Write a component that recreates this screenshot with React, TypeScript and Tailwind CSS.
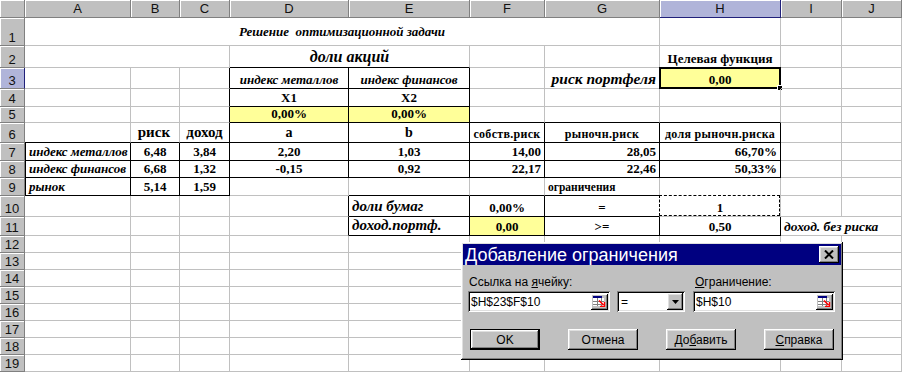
import clsx from "clsx";

type CellSpec = {
  t?: string;
  span?: number;
  a?: "l" | "c" | "r";
  v?: boolean;
  f?: string;
  i?: boolean;
  rb?: boolean;
  bb?: boolean;
  lb?: boolean;
  y?: boolean;
  active?: boolean;
  ants?: boolean;
};

const COLS = ["A", "B", "C", "D", "E", "F", "G", "H", "I", "J"];

const spanCls: Record<number, string> = {
  1: "",
  2: "col-span-2",
  3: "col-span-3",
  7: "col-span-7",
};
const al = { l: "justify-start", c: "justify-center", r: "justify-end" };

const e: CellSpec = {};
const small = "text-[12px] tracking-[0.3px]";

// rows 1..11, everything below is empty
const sheet: Record<number, CellSpec[]> = {
  1: [{ span: 7, t: "Решение  оптимизационной задачи", a: "c", v: true, i: true, f: "text-[13px]" }, e, e, e],
  2: [
    { span: 3 },
    { span: 2, t: "доли акций", a: "c", i: true, f: "text-[16px]", bb: true },
    e,
    e,
    { t: "Целевая функция", a: "c" },
    e,
    e,
  ],
  3: [
    e,
    e,
    { rb: true },
    { t: "индекс металлов", a: "c", i: true, rb: true, bb: true },
    { t: "индекс финансов", a: "c", i: true, rb: true, bb: true },
    e,
    { t: "риск портфеля", a: "r", i: true, f: "text-[15.5px]" },
    { t: "0,00", a: "c", y: true, active: true },
    e,
    e,
  ],
  4: [e, e, { rb: true }, { t: "X1", a: "c", rb: true, bb: true }, { t: "X2", a: "c", rb: true, bb: true }, e, e, e, e, e],
  5: [
    e,
    e,
    { rb: true },
    { t: "0,00%", a: "c", y: true, rb: true, bb: true },
    { t: "0,00%", a: "c", y: true, rb: true, bb: true },
    { bb: true },
    { bb: true },
    { bb: true },
    e,
    e,
  ],
  6: [
    { bb: true },
    { t: " риск", f: "text-[15px]", bb: true },
    { t: "доход", a: "c", f: "text-[15px]", rb: true, bb: true },
    { t: "a", a: "c", f: "text-[14px]", rb: true, bb: true },
    { t: "b", a: "c", f: "text-[14px]", rb: true, bb: true },
    { t: "собств.риск", a: "c", f: small, rb: true, bb: true },
    { t: "рыночн.риск", a: "c", f: small, rb: true, bb: true },
    { t: "доля рыночн.риска", a: "c", f: small, rb: true, bb: true },
    e,
    e,
  ],
  7: [
    { t: "индекс металлов", i: true, lb: true, rb: true, bb: true },
    { t: "6,48", a: "c", rb: true, bb: true },
    { t: "3,84", a: "c", rb: true, bb: true },
    { t: "2,20", a: "c", rb: true, bb: true },
    { t: "1,03", a: "c", rb: true, bb: true },
    { t: "14,00", a: "r", rb: true, bb: true },
    { t: "28,05", a: "r", rb: true, bb: true },
    { t: "66,70%", a: "r", rb: true, bb: true },
    e,
    e,
  ],
  8: [
    { t: "индекс финансов", i: true, lb: true, rb: true, bb: true },
    { t: "6,68", a: "c", rb: true, bb: true },
    { t: "1,32", a: "c", rb: true, bb: true },
    { t: "-0,15", a: "c", rb: true, bb: true },
    { t: "0,92", a: "c", rb: true, bb: true },
    { t: "22,17", a: "r", rb: true, bb: true },
    { t: "22,46", a: "r", rb: true, bb: true },
    { t: "50,33%", a: "r", rb: true, bb: true },
    e,
    e,
  ],
  9: [
    { t: "рынок", i: true, lb: true, rb: true, bb: true },
    { t: "5,14", a: "c", rb: true, bb: true },
    { t: "1,59", a: "c", rb: true, bb: true },
    e,
    { bb: true },
    { bb: true },
    { t: "ограничения", f: "text-[11.5px]", bb: true },
    e,
    e,
    e,
  ],
  10: [
    e,
    e,
    e,
    { rb: true },
    { t: "доли бумаг", i: true, f: "text-[15px]", rb: true, bb: true },
    { t: "0,00%", a: "c", rb: true, bb: true },
    { t: "=", a: "c", bb: true },
    { t: "1", a: "c", ants: true },
    e,
    e,
  ],
  11: [
    e,
    e,
    e,
    { rb: true },
    { t: "доход.портф.", i: true, f: "text-[15px]", rb: true, bb: true },
    { t: "0,00", a: "c", y: true, rb: true, bb: true },
    { t: ">=", a: "c", rb: true, bb: true },
    { t: "0,50", a: "c", rb: true, bb: true },
    { span: 2, t: "доход. без риска", i: true, f: "text-[13.5px]" },
  ],
};

function Cell({ c }: { c: CellSpec }) {
  return (
    <div
      className={clsx(
        "relative flex overflow-visible whitespace-pre leading-none px-[3px] border-r border-b font-bold text-black",
        spanCls[c.span ?? 1],
        c.v ? "items-center" : "items-end pb-[2px]",
        al[c.a ?? "l"],
        c.f ?? "text-[13px]",
        c.i && "italic",
        c.rb ? "border-r-black" : "border-r-[#c0c0c0]",
        c.bb ? "border-b-black" : "border-b-[#c0c0c0]",
        c.lb && "border-l border-l-black",
        c.y && "bg-[#ffff99]"
      )}
    >
      {c.ants && (
        <div className="absolute -top-px -left-px right-0 bottom-0 border border-dashed border-black bg-white" />
      )}
      {c.active && (
        <>
          <div className="absolute -top-px -left-px -right-px -bottom-px border-2 border-black" />
          <div className="absolute -right-[3px] -bottom-[3px] h-[6px] w-[6px] border border-white bg-black" />
        </>
      )}
      <span className="relative">{c.t}</span>
    </div>
  );
}

function Header({ label, sel }: { label: string; sel?: boolean }) {
  return (
    <div
      className={clsx(
        "flex items-center justify-center border-r border-b font-['Liberation_Sans',Arial,sans-serif] text-[13px] text-[#111] shadow-[inset_1px_1px_0_#fff]",
        sel ? "bg-[#b0b4d9] border-r-[#20207a] border-b-[#20207a]" : "bg-[#c0c0c0] border-r-[#808080] border-b-[#808080]"
      )}
    >
      {label}
    </div>
  );
}

function RowHeader({ n }: { n: number }) {
  return (
    <div
      className={clsx(
        "flex items-end justify-center pb-[1px] leading-none border-r border-b font-['Liberation_Sans',Arial,sans-serif] text-[13px] text-[#111] shadow-[inset_1px_1px_0_#fff]",
        n === 3 ? "bg-[#b0b4d9] border-r-[#20207a] border-b-[#808080]" : "bg-[#c0c0c0] border-r-[#808080] border-b-[#808080]"
      )}
    >
      {n}
    </div>
  );
}

function RefButton() {
  return (
    <div className="flex h-[16px] w-[17px] shrink-0 items-center justify-center bg-[#c0c0c0] shadow-[inset_-1px_-1px_#000,inset_1px_1px_#fff,inset_-2px_-2px_#808080]">
      <svg width="13" height="11" viewBox="0 0 13 11">
        <rect x="0" y="0" width="9" height="2" fill="#000080" />
        <rect x="0" y="2" width="11" height="8" fill="#fff" />
        <path d="M0 5.5h11M0 8.5h11M4.5 2v8M8.5 2v8" stroke="#808080" strokeWidth="1" />
        <path d="M6 4.5l4.5 4.5" stroke="#f00" strokeWidth="1.6" />
        <path d="M11.5 6v4.5H7" stroke="#f00" strokeWidth="1.4" fill="none" />
      </svg>
    </div>
  );
}

const sunken =
  "bg-white shadow-[inset_1px_1px_#808080,inset_-1px_-1px_#fff,inset_2px_2px_#000,inset_-2px_-2px_#dfdfdf]";
const raised =
  "bg-[#c0c0c0] shadow-[inset_-1px_-1px_#000,inset_1px_1px_#fff,inset_-2px_-2px_#808080,inset_2px_2px_#dfdfdf]";

function Dialog() {
  return (
    <div
      className={clsx(
        "absolute left-[461px] top-[242px] flex h-[118px] w-[382px] flex-col p-[2px] font-['Liberation_Sans',Arial,sans-serif] text-[12px] text-black",
        raised
      )}
    >
      <div className="flex h-[21px] items-center justify-between bg-[#000080] pl-[2px] pr-[2px]">
        <span className="text-[18px] leading-none text-white">Добавление ограничения</span>
        <button className={clsx("flex h-[17px] w-[20px] items-center justify-center", raised)}>
          <svg width="10" height="9" viewBox="0 0 10 9">
            <path d="M1 0.5l8 8M9 0.5l-8 8" stroke="#000" strokeWidth="2" />
          </svg>
        </button>
      </div>

      <div className="mt-[10px] flex gap-[7px] px-[5px]">
        <div className="flex w-[142px] flex-col">
          <span className="pl-[1px] leading-[14px]">
            Ссылка на <span className="underline">я</span>чейку:
          </span>
          <div className={clsx("mt-[2px] flex h-[21px] items-center justify-between pl-[3px] pr-[2px]", sunken)}>
            <span>$H$23$F$10</span>
            <RefButton />
          </div>
        </div>
        <div className="flex w-[68px] flex-col">
          <span className="leading-[14px]">&nbsp;</span>
          <div className={clsx("mt-[2px] flex h-[21px] items-center justify-between pl-[4px] pr-[2px]", sunken)}>
            <span>=</span>
            <div className={clsx("flex h-[17px] w-[16px] items-center justify-center", raised)}>
              <svg width="7" height="4" viewBox="0 0 7 4">
                <path d="M0 0h7L3.5 4z" fill="#000" />
              </svg>
            </div>
          </div>
        </div>
        <div className="ml-px flex w-[142px] flex-col">
          <span className="pl-[2px] leading-[14px]">
            <span className="underline">О</span>граничение:
          </span>
          <div className={clsx("mt-[2px] flex h-[21px] items-center justify-between pl-[3px] pr-[2px]", sunken)}>
            <span>$H$10</span>
            <RefButton />
          </div>
        </div>
      </div>

      <div className="mt-[17px] flex justify-between px-[7px]">
        <button className="h-[21px] w-[70px] border border-black">
          <div className={clsx("flex h-full w-full items-center justify-center", raised)}>OK</div>
        </button>
        <button className={clsx("h-[21px] w-[70px]", raised)}>Отмена</button>
        <button className={clsx("h-[21px] w-[70px]", raised)}>
          До<span className="underline">б</span>авить
        </button>
        <button className={clsx("h-[21px] w-[70px]", raised)}>
          <span className="underline">С</span>правка
        </button>
      </div>
    </div>
  );
}

export default function App() {
  const rows = Array.from({ length: 19 }, (_, i) => i + 1);

  return (
    <div className="relative h-[373px] w-[902px] overflow-hidden bg-white font-['Liberation_Serif','Times_New_Roman',serif]">
      <div className="grid grid-cols-[25px_106px_49px_50px_119px_121px_75px_115px_121px_61px_60px] grid-rows-[18px_28px_22px_21px_18px_16px_20px_18px_17px_18px_21px_19px_17px_17px_17px_17px_17px_17px_17px_17px]">
        <Header label="" />
        {COLS.map((c) => (
          <Header key={c} label={c} sel={c === "H"} />
        ))}

        {rows.map((n) => {
          const cells = sheet[n] ?? COLS.map(() => e);
          return [
            <RowHeader key={`h${n}`} n={n} />,
            ...cells.map((c, j) => <Cell key={`${n}-${j}`} c={c} />),
          ];
        })}
      </div>

      <Dialog />
    </div>
  );
}
